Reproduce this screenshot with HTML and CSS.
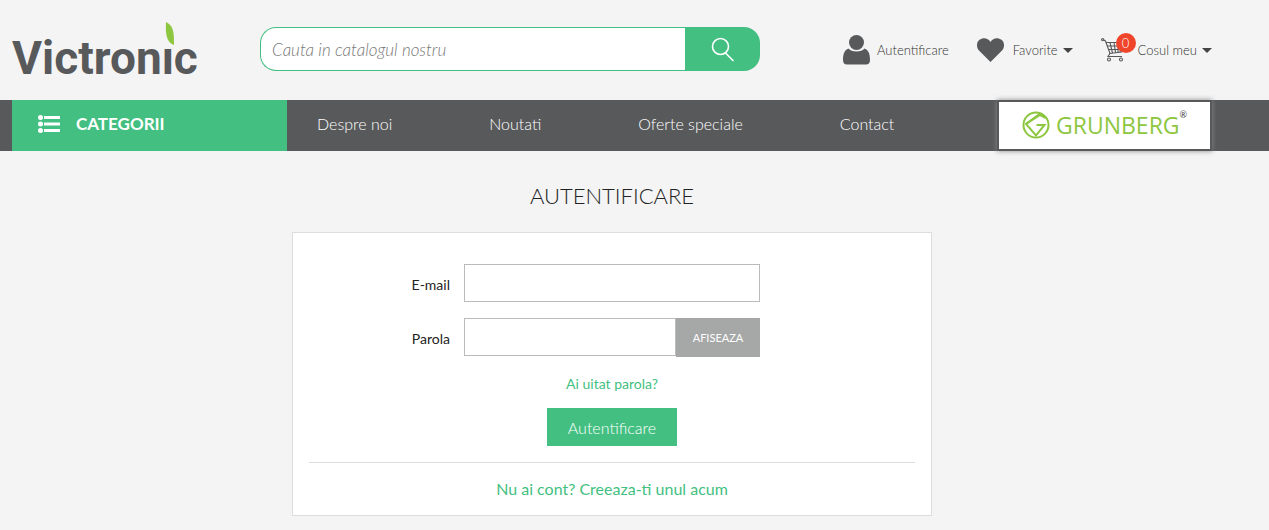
FILE: index.html
```html
<!DOCTYPE html>
<html lang="ro">
<head>
  <meta charset="UTF-8" />
  <meta name="viewport" content="width=device-width, initial-scale=1.0"/>
  <title>Autentificare - Victronic</title>
  <link rel="stylesheet" href="styles.css">
</head>
<body>
  <header class="container header">
    <a href="#" class="logo">
      <svg width="192" height="72" viewBox="0 0 192 72">
        <text class="logo-text" x="0" y="60">Victronic</text>
        <rect class="logo-mask" x="150" y="20" width="14" height="13"/>
        <path class="logo-leaf" d="M154 8 C161 12 162 16 162 31 C156 29 153 23 154 8 Z"/>
      </svg>
    </a>

    <form class="search" onsubmit="return false">
      <input type="text" class="search-input" placeholder="Cauta in catalogul nostru" aria-label="Cauta in catalogul nostru" />
      <button type="submit" class="search-btn" aria-label="Cauta">
        <svg width="24" height="25" viewBox="0 0 24 25" fill="none" stroke="#fff" stroke-width="1.6">
          <circle cx="9.5" cy="9.5" r="8"/>
          <path d="M14.500 16 L22.500 24"/>
        </svg>
      </button>
    </form>

    <nav class="user-menu">
      <a href="#" class="user-link">
        <svg width="27" height="30" viewBox="0 0 27 30" fill="#58595b">
          <circle cx="13.500" cy="7.500" r="7.500"/>
          <path d="M5.500 13.500 C8 17.500 19 17.500 21.500 13.500 C25.500 15 27 19 27 25 C27 28 25.500 29.500 23 29.500 H4 C1.500 29.500 0 28 0 25 C0 19 1.500 15 5.500 13.500 Z"/>
        </svg>
        <span>Autentificare</span>
      </a>
      <a href="#" class="user-link link-fav">
        <svg width="27" height="24" viewBox="0 0 27 24" fill="#58595b">
          <path d="M13.500 24 L2 12.500 C-1 9 -0.500 4 2.500 1.800 C6 -0.800 11 -0.300 13.500 4 C16 -0.300 21 -0.800 24.500 1.800 C27.500 4 28 9 25 12.500 Z"/>
        </svg>
        <span>Favorite</span>
        <i class="caret"></i>
      </a>
      <a href="#" class="user-link link-cart">
        <span class="cart">
          <svg width="25" height="24" viewBox="0 0 25 24" fill="none" stroke="#58595b" stroke-width="1.1">
            <circle cx="1.700" cy="1.700" r="1.100"/>
            <path d="M2.500 2 L4.500 3 L9 15.500 L7 18.500 H21"/>
            <path d="M5 4.500 H23.500 L20.500 14 L8.500 15.500"/>
            <path d="M6 8 H22.500 M7.200 11.500 H21.500 M9 4.500 L11.500 15 M13 4.500 L14.500 14.700 M17 4.500 L17 14.400 M21 4.500 L19 14"/>
            <circle cx="8" cy="21.500" r="1.500"/>
            <circle cx="20" cy="21.500" r="1.500"/>
          </svg>
          <span class="badge">0</span>
        </span>
        <span>Cosul meu</span>
        <i class="caret"></i>
      </a>
    </nav>
  </header>

  <div class="navbar">
    <div class="container nav-inner">
      <a href="#" class="categories">
        <svg width="22" height="18" viewBox="0 0 22 18" fill="#fff">
          <circle cx="2.500" cy="2.500" r="2.500"/>
          <circle cx="2.500" cy="9" r="2.500"/>
          <circle cx="2.500" cy="15.500" r="2.500"/>
          <path d="M6 1 H22 V4 H6 Z M6 7.500 H22 V10.500 H6 Z M6 14 H22 V17 H6 Z"/>
        </svg>
        <span>CATEGORII</span>
      </a>
      <nav class="nav-links">
        <a href="#">Despre noi</a>
        <a href="#">Noutati</a>
        <a href="#">Oferte speciale</a>
        <a href="#">Contact</a>
      </nav>
      <a href="#" class="brand">
        <svg width="28" height="28" viewBox="0 0 28 28" fill="none" stroke="#8dc63f" stroke-width="2">
          <circle cx="14" cy="14" r="12.500"/>
          <path d="M24 7 L17 3.500 L4 13 L14 24.500 L22.500 14 H14.500"/>
          <path d="M4 13 L18 4"/>
        </svg>
        <span class="brand-name">GRUNBERG</span><span class="brand-mark">®</span>
      </a>
    </div>
  </div>

  <main class="container">
    <h1>AUTENTIFICARE</h1>

    <div class="card">
      <form onsubmit="return false">
        <div class="row">
          <label for="email">E-mail</label>
          <input type="email" id="email" class="field" />
        </div>
        <div class="row">
          <label for="password">Parola</label>
          <div class="field-group">
            <input type="password" id="password" class="field" />
            <button type="button" class="show-btn" onclick="togglePassword()">AFISEAZA</button>
          </div>
        </div>
        <a href="#" class="forgot">Ai uitat parola?</a>
        <button type="submit" class="login-btn">Autentificare</button>
      </form>
      <div class="no-account">
        <a href="#">Nu ai cont? Creeaza-ti unul acum</a>
      </div>
    </div>
  </main>

  <script>
    function togglePassword() {
      const input = document.getElementById("password");
      input.type = input.type === "password" ? "text" : "password";
    }
  </script>
</body>
</html>
```
FILE: styles.css
```css
* { box-sizing: border-box; }
body { margin: 0; background: #f4f4f4; color: #232323; font-family: Lato, sans-serif; font-size: 14px; line-height: 20px; }
a { color: #43bf81; text-decoration: none; }
input, button { font-family: inherit; margin: 0; }
button { border: 0; cursor: pointer; }
svg { display: block; flex: none; }
.container { max-width: 1200px; margin: 0 12px; }

/* header */
.header { display: flex; align-items: center; height: 100px; }
.logo { width: 248px; }
.logo-text { font-family: Roboto, sans-serif; font-size: 46px; font-weight: bold; fill: #58595b; }
.logo-mask { fill: #f4f4f4; }
.logo-leaf { fill: #8dc63f; }
.search { display: flex; width: 500px; height: 44px; margin-bottom: 2px; }
.search-input { flex: 1; min-width: 0; padding: 0 11px; border: 1px solid #43bf81; border-right: 0; border-radius: 16px 0 0 16px; background: #fff; font-size: 17px; font-weight: 300; }
.search-input::placeholder { color: #777; font-style: italic; }
.search-btn { display: flex; align-items: center; justify-content: center; width: 75px; padding: 0; border-radius: 0 16px 16px 0; background: #43bf81; }
.user-menu { display: flex; align-items: center; gap: 28px; margin-left: auto; }
.user-link { display: flex; align-items: center; gap: 7px; color: #333; font-size: 13px; font-weight: 300; }
.link-fav { gap: 9px; }
.link-cart { gap: 12px; }
.caret { border: 5px solid transparent; border-top-color: #444; border-bottom: 0; margin-left: -4px; }
.link-cart .caret { margin-left: -7px; }
.cart { position: relative; }
.badge { position: absolute; top: -5px; left: 15px; width: 20px; height: 20px; border-radius: 50%; background: #f0452b; color: #fff; text-align: center; }

/* navigation bar */
.navbar { background: #58595b; }
.nav-inner { display: flex; height: 51px; }
.categories { display: flex; align-items: center; gap: 16px; width: 275px; padding: 0 26px 3px; background: #43bf81; color: #fff; font-size: 17px; font-weight: bold; }
.nav-links { display: flex; align-items: center; gap: 97px; padding: 0 0 3px 30px; }
.nav-links a { color: #fff; font-size: 16px; font-weight: 300; white-space: nowrap; }
.brand { display: flex; align-items: center; width: 215px; margin-left: auto; padding: 0 0 2px 23px; border: 2px solid #58595b; background: #fff; box-shadow: 0 0 5px #888; }
.brand-name { margin-left: 6px; color: #8dc63f; font-family: "Open Sans", sans-serif; font-size: 23px; }
.brand-mark { align-self: flex-start; padding-top: 3px; color: #444; font-size: 9px; }

/* login */
h1 { margin: 32px 0 23px; font-size: 22px; line-height: 26px; font-weight: 300; text-align: center; }
.card { max-width: 640px; margin: 0 auto 14px; padding: 31px 16px 15px; border: 1px solid #ddd; background: #fff; }
.row { display: grid; grid-template-columns: 141px 296px; gap: 14px; align-items: center; margin-bottom: 16px; }
.row label { padding-top: 4px; text-align: right; }
.field { width: 100%; height: 38px; padding: 0 10px; border: 1px solid #bbb; background: #fff; }
.field-group { display: flex; }
.field-group .field { flex: 1; min-width: 0; }
.show-btn { width: 84px; height: 39px; margin-bottom: -1px; padding: 0; background: #a6a8a7; color: #fff; font-size: 11px; }
.forgot { display: block; margin: 18px 0 14px; text-align: center; }
.login-btn { display: block; height: 38px; margin: 0 auto 16px; padding: 0 21px; background: #43bf81; color: #fff; font-size: 16px; font-weight: 300; }
.no-account { padding-top: 16px; border-top: 1px solid #ddd; font-size: 16px; text-align: center; }
.no-account a { display: block; padding-bottom: 1px; }
```
